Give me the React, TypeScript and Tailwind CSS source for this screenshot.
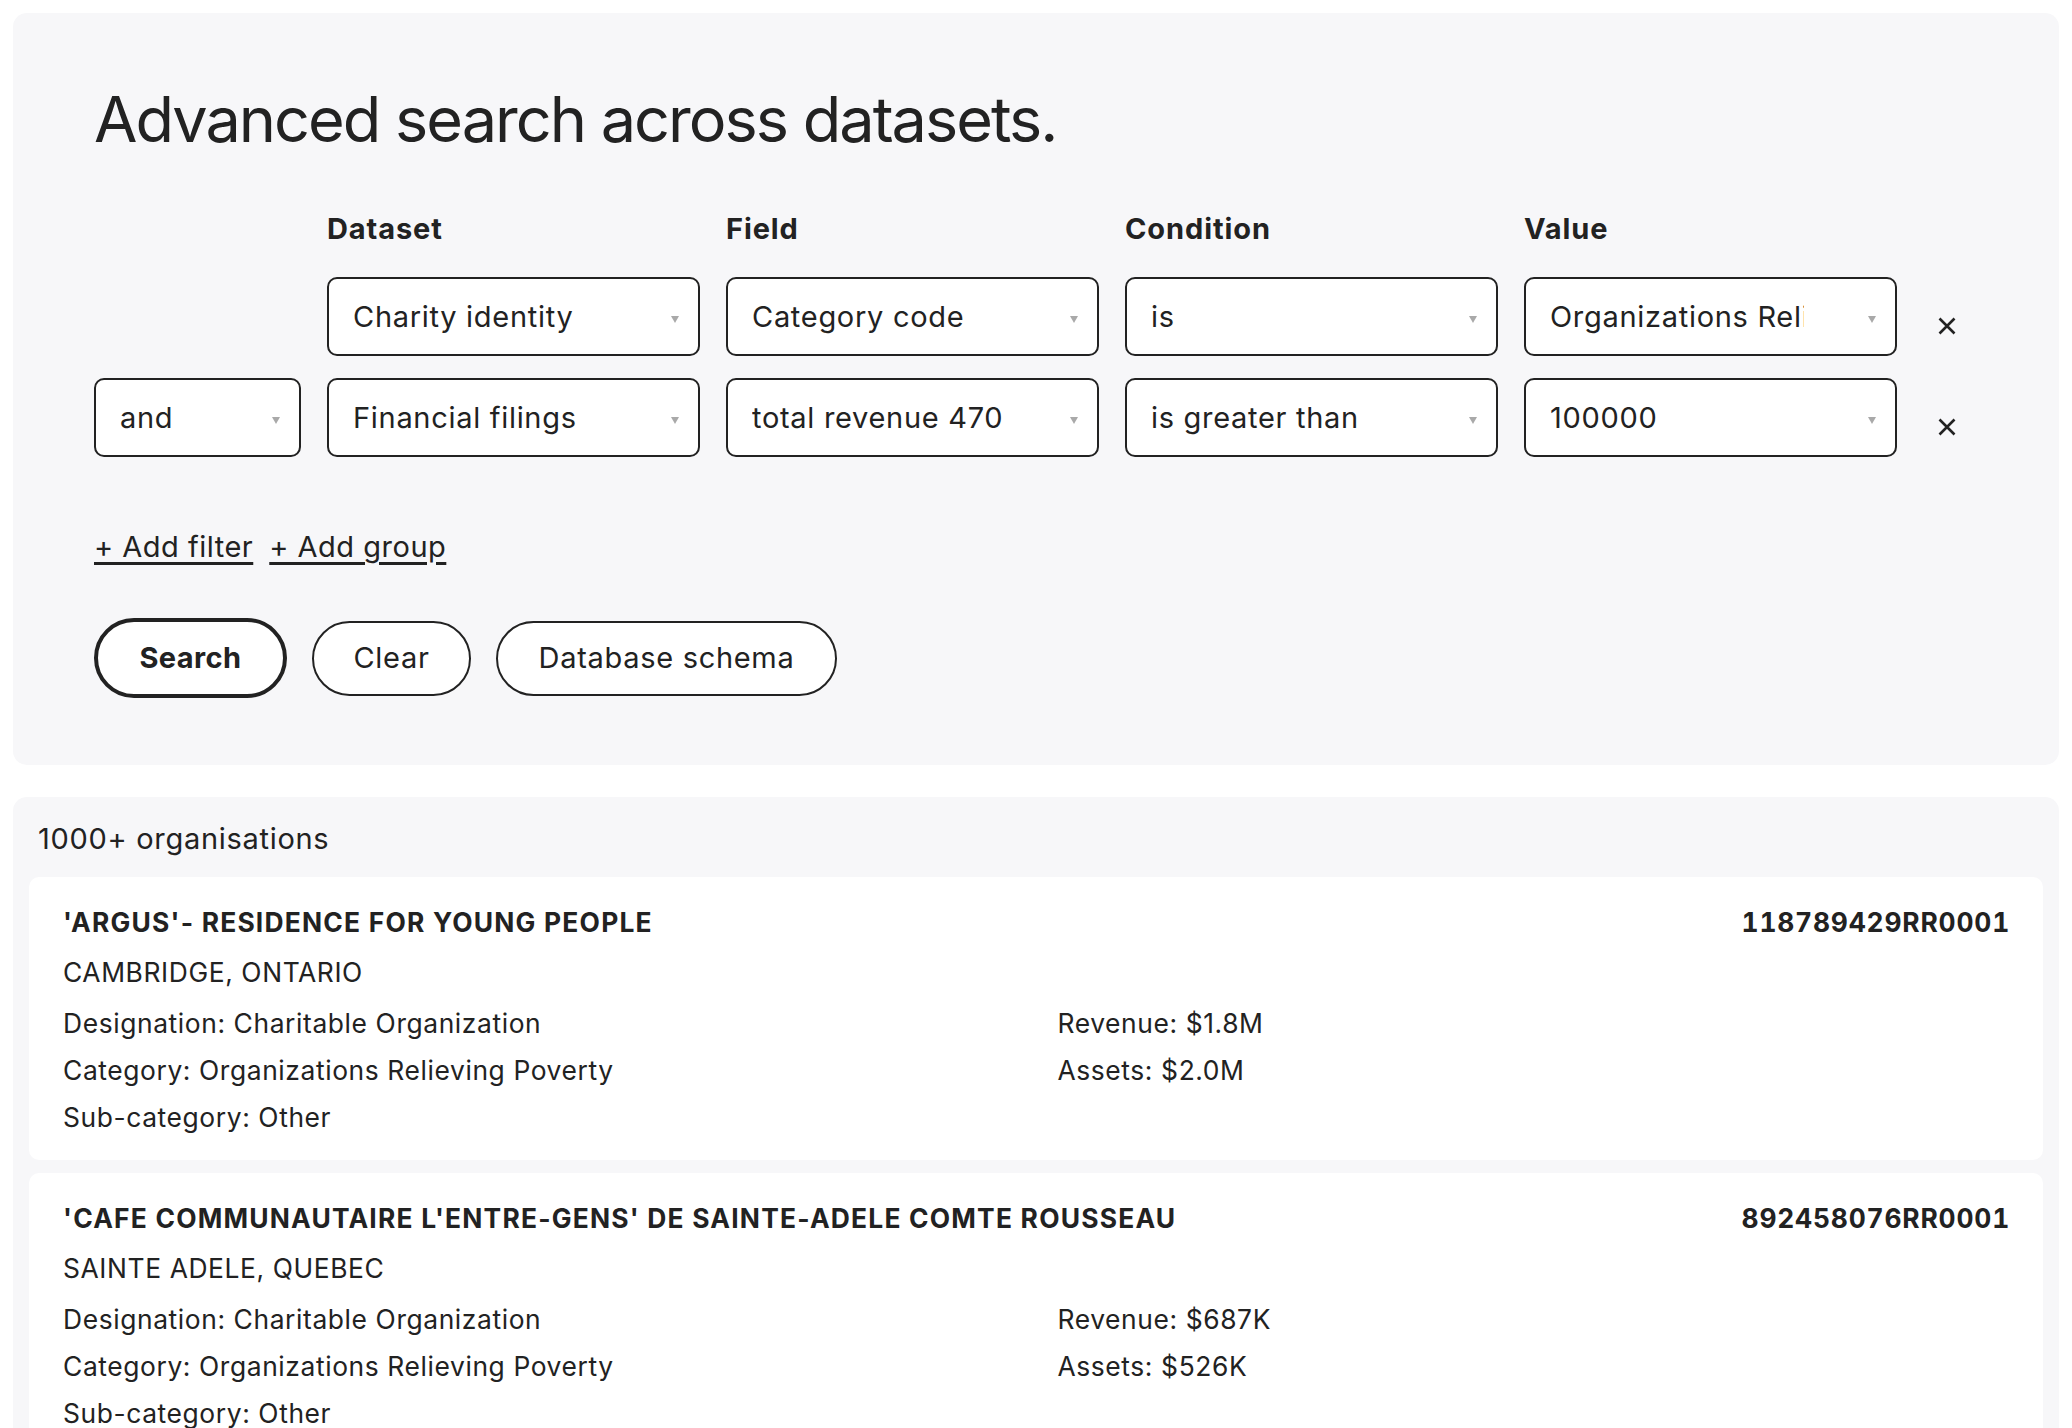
import React from "react";

function Chevron() {
  return (
    <svg width="8" height="7" viewBox="0 0 8 7" className="shrink-0 mt-[6px]">
      <polygon points="0,0 8,0 4,7" fill="#a9a9a9" />
    </svg>
  );
}

function XIcon() {
  return (
    <svg width="18" height="18" viewBox="0 0 18 18" className="shrink-0 ml-[15px] mt-[18px]">
      <path d="M1.5 1.5 L16.5 16.5 M16.5 1.5 L1.5 16.5" stroke="#222" strokeWidth="2.6" strokeLinecap="butt" />
    </svg>
  );
}

function Select({ text, w }: { text: string; w: string }) {
  return (
    <div
      className={`${w} h-[79px] shrink-0 border-2 border-[#222] rounded-[10px] bg-white flex items-center pl-[24px] pr-[19px]`}
    >
      <span className="flex-1 min-w-0 overflow-hidden whitespace-nowrap text-[29px] leading-[40px] tracking-[0.7px] text-[#222] mr-[64px]">
        {text}
      </span>
      <Chevron />
    </div>
  );
}

type Org = {
  name: string;
  bn: string;
  loc: string;
  rev: string;
  assets: string;
};

const orgs: Org[] = [
  {
    name: "'ARGUS'- RESIDENCE FOR YOUNG PEOPLE",
    bn: "118789429RR0001",
    loc: "CAMBRIDGE, ONTARIO",
    rev: "$1.8M",
    assets: "$2.0M",
  },
  {
    name: "'CAFE COMMUNAUTAIRE L'ENTRE-GENS' DE SAINTE-ADELE COMTE ROUSSEAU",
    bn: "892458076RR0001",
    loc: "SAINTE ADELE, QUEBEC",
    rev: "$687K",
    assets: "$526K",
  },
  {
    name: "'LIFE' BIBLE CHURCH",
    bn: "107451676RR0001",
    loc: "TORONTO, ONTARIO",
    rev: "$312K",
    assets: "$1.1M",
  },
];

function Card({ o }: { o: Org }) {
  return (
    <div className="bg-white rounded-[10px] pl-[34px] pr-[33px] pt-[22px] pb-[19px] text-[26.4px] text-[#222] tracking-[0.6px]">
      <div className="flex justify-between leading-[47px] font-bold">
        <span className="tracking-[1.2px]">{o.name}</span>
        <span className="tabular-nums tracking-[0.8px]">{o.bn}</span>
      </div>
      <div className="mt-[3px] leading-[47px]">{o.loc}</div>
      <div className="mt-[4px] grid grid-cols-2 gap-x-[42px] leading-[47px]">
        <div>
          <div>Designation: Charitable Organization</div>
          <div>Category: Organizations Relieving Poverty</div>
          <div>Sub-category: Other</div>
        </div>
        <div>
          <div>Revenue: {o.rev}</div>
          <div>Assets: {o.assets}</div>
        </div>
      </div>
    </div>
  );
}

export default function App() {
  return (
    <div className="min-h-screen bg-white p-[13px] font-[Inter,sans-serif] text-[#222]">
      <section className="bg-[#f7f7f9] rounded-[14px] pl-[81px] pr-[40px] pt-[68px] pb-[67px]">
        <h1 className="text-[63px] leading-[76px] font-normal tracking-[-2px]">
          Advanced search across datasets.
        </h1>

        <div className="flex gap-[26px] mt-[52px] text-[29px] leading-[40px] font-bold tracking-[0.9px]">
          <div className="w-[207px] shrink-0" />
          <div className="w-[373px] shrink-0">Dataset</div>
          <div className="w-[373px] shrink-0">Field</div>
          <div className="w-[373px] shrink-0">Condition</div>
          <div className="w-[373px] shrink-0">Value</div>
        </div>

        <div className="flex items-center gap-[26px] mt-[28px]">
          <div className="w-[207px] shrink-0" />
          <Select w="w-[373px]" text="Charity identity" />
          <Select w="w-[373px]" text="Category code" />
          <Select w="w-[373px]" text="is" />
          <Select w="w-[373px]" text="Organizations Relieving Poverty" />
          <XIcon />
        </div>

        <div className="flex items-center gap-[26px] mt-[22px]">
          <Select w="w-[207px]" text="and" />
          <Select w="w-[373px]" text="Financial filings" />
          <Select w="w-[373px]" text="total revenue 470" />
          <Select w="w-[373px]" text="is greater than" />
          <Select w="w-[373px]" text="100000" />
          <XIcon />
        </div>

        <div className="flex gap-[16px] mt-[70px] text-[29px] leading-[40px] tracking-[0.5px]">
          <a className="underline decoration-3 underline-offset-[5px] cursor-pointer">+ Add filter</a>
          <a className="underline decoration-3 underline-offset-[5px] cursor-pointer">+ Add group</a>
        </div>

        <div className="flex items-center gap-[25px] mt-[51px] text-[29px] tracking-[0.7px]">
          <button className="w-[193px] h-[80px] border-4 border-[#222] rounded-full bg-white font-bold tracking-[0.4px] flex items-center justify-center">
            Search
          </button>
          <button className="w-[159px] h-[75px] border-2 border-[#222] rounded-full bg-white flex items-center justify-center">
            Clear
          </button>
          <button className="w-[341px] h-[75px] border-2 border-[#222] rounded-full bg-white flex items-center justify-center">
            Database schema
          </button>
        </div>
      </section>

      <section className="mt-[32px] bg-[#f7f7f9] rounded-[14px] pt-[20px] px-[16px] pb-[16px]">
        <div className="text-[29px] leading-[44px] pl-[9px] mb-[16px] tracking-[0.7px]">1000+ organisations</div>
        <div className="flex flex-col gap-[13px]">
          {orgs.map((o) => (
            <Card key={o.bn} o={o} />
          ))}
        </div>
      </section>
    </div>
  );
}
